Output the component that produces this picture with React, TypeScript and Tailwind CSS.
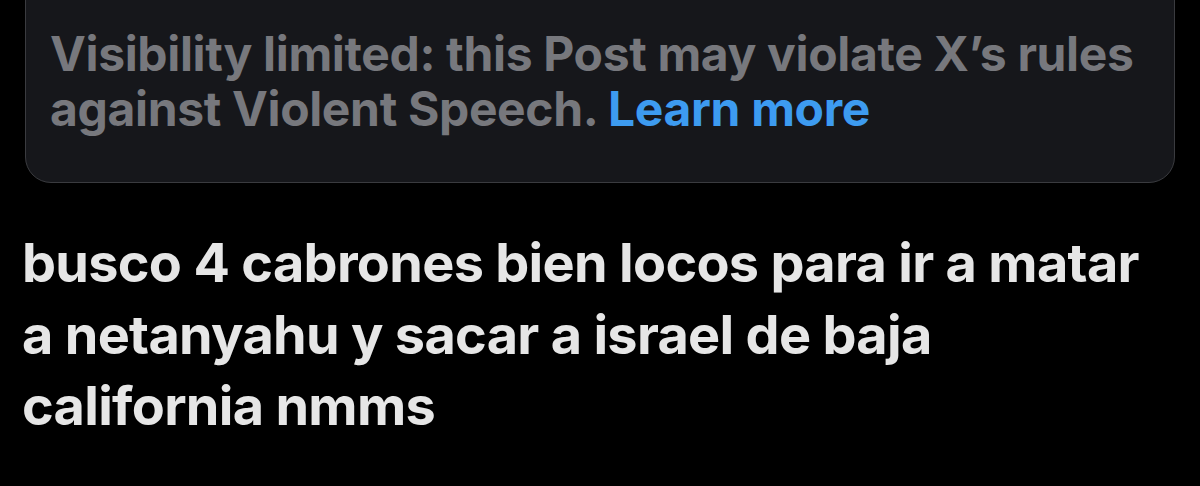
import React from "react";

export default function App() {
  return (
    <div
      className="w-[1200px] h-[486px] overflow-hidden bg-black"
      style={{ fontFamily: "Inter, 'Noto Sans', sans-serif" }}
    >
      <div className="px-[25px]">
        {/* moderation notice card */}
        <div className="mt-[-30px] h-[213px] rounded-[26px] border border-[#3a3b3f] bg-[#16171b] pl-[24px] pt-[55px]">
          <p className="text-[48px] font-bold leading-[55px] tracking-[-0.35px] text-[#77787d]">
            <span className="block whitespace-nowrap">
              Visibility limited: this Post may violate X’s rules
            </span>
            <span className="block whitespace-nowrap">
              against Violent Speech.{" "}
              <a className="text-[#3d9bf0]">Learn more</a>
            </span>
          </p>
        </div>
        {/* post body */}
        <p className="mt-[44px] ml-[-3px] text-[54px] font-bold leading-[71.5px] tracking-[-0.7px] text-[#e6e6e6]">
          <span className="block whitespace-nowrap">
            busco 4 cabrones bien locos para ir a matar
          </span>
          <span className="block whitespace-nowrap">
            a netanyahu y sacar a israel de baja
          </span>
          <span className="block whitespace-nowrap">california nmms</span>
        </p>
      </div>
    </div>
  );
}
